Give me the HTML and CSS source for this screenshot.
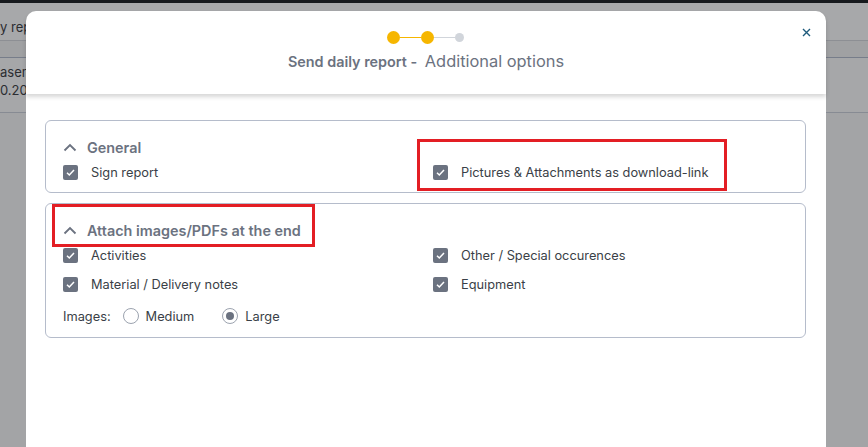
FILE: index.html
```html
<!doctype html>
<html lang="en">
  <head>
    <meta charset="utf-8">
    <title>Send daily report</title>
    <link rel="stylesheet" href="styles.css">
  </head>
  <body>
    <div class="page">
      <div class="topbar"></div>
      <div class="page-row tab">y repo</div>
      <div class="page-row gap"></div>
      <div class="page-row item">
        <div>asem</div>
        <div>0.202</div>
      </div>
    </div>

    <div class="modal">
      <div class="modal-head">
        <div class="stepper">
          <span class="dot done"></span>
          <span class="bar done"></span>
          <span class="dot done"></span>
          <span class="bar"></span>
          <span class="dot small"></span>
        </div>
        <div class="title"><b>Send daily report -</b> Additional options</div>
        <button class="close" type="button">
          <svg width="9" height="9" viewBox="0 0 9 9"><path d="M1 1L8 8M8 1L1 8" stroke="#1f5b7c" stroke-width="1.4" fill="none"/></svg>
        </button>
      </div>

      <div class="modal-body">
        <div class="group">
          <div class="group-title">
            <svg class="chev" width="14" height="9" viewBox="0 0 14 9"><path d="M1.5 7.5L7 2L12.5 7.5" stroke="#6b7280" stroke-width="1.8" fill="none"/></svg>
            General
          </div>
          <div class="grid">
            <label class="check"><span class="box"></span>Sign report</label>
            <label class="check"><span class="box"></span>Pictures &amp; Attachments as download-link</label>
          </div>
        </div>

        <div class="group">
          <div class="group-title">
            <svg class="chev" width="14" height="9" viewBox="0 0 14 9"><path d="M1.5 7.5L7 2L12.5 7.5" stroke="#6b7280" stroke-width="1.8" fill="none"/></svg>
            Attach images/PDFs at the end
          </div>
          <div class="grid tight">
            <label class="check"><span class="box"></span>Activities</label>
            <label class="check"><span class="box"></span>Other / Special occurences</label>
            <label class="check"><span class="box"></span>Material / Delivery notes</label>
            <label class="check"><span class="box"></span>Equipment</label>
          </div>
          <div class="sizes">
            <span>Images:</span>
            <label class="radio"><span class="ring"></span>Medium</label>
            <label class="radio"><span class="ring on"></span>Large</label>
          </div>
        </div>
      </div>
    </div>

    <div class="mark mark-a"></div>
    <div class="mark mark-b"></div>
  </body>
</html>
```

FILE: styles.css
```css
html, body {
  height: 100%;
}

body {
  margin: 0;
  font-family: Inter, "Noto Sans", sans-serif;
  background: #a3a4a6;
  overflow: hidden;
}

.page {
  display: flex;
  flex-direction: column;
}

.topbar {
  height: 3px;
  background: #16191d;
}

.page-row {
  color: #2b2d31;
  font-size: 13px;
}

.tab {
  height: 37px;
  line-height: 48px;
  border-bottom: 1px solid #8d8f94;
  background: #a7a8aa;
}

.gap {
  height: 16px;
  background: #a0a1a3;
  border-bottom: 1px solid #777d8a;
}

.item {
  height: 49px;
  padding-top: 5px;
  line-height: 18px;
  background: #a6a7a9;
  border-bottom: 1px solid #878b93;
}

.modal {
  position: absolute;
  left: 26px;
  top: 11px;
  width: 800px;
  height: 436px;
  background: #fff;
  border-radius: 10px 10px 0 0;
}

.modal-head {
  position: relative;
  height: 83px;
  box-sizing: border-box;
  padding-top: 20px;
  border-radius: 10px 10px 0 0;
  box-shadow: 0 3px 4px rgba(0, 0, 0, 0.16);
  text-align: center;
}

.stepper {
  display: flex;
  align-items: center;
  justify-content: center;
  height: 13px;
  margin-left: -1px;
}

.dot {
  width: 13px;
  height: 13px;
  border-radius: 50%;
  background: #d1d5db;
}

.dot.small {
  width: 9px;
  height: 9px;
}

.bar {
  width: 21px;
  height: 1px;
  background: #d1d5db;
}

.done {
  background: #f6b600;
}

.title {
  margin-top: 8px;
  font-size: 16.4px;
  color: #6b7280;
  line-height: 19px;
}

.title b {
  font-size: 14.4px;
  font-weight: 600;
  margin-right: 3px;
}

.close {
  position: absolute;
  right: 15px;
  top: 14px;
  border: 0;
  background: none;
  padding: 0;
  cursor: pointer;
}

.modal-body {
  padding: 26px 20px 0 19px;
  display: flex;
  flex-direction: column;
  gap: 10px;
}

.group {
  border: 1px solid #b5bccb;
  border-radius: 6px;
  padding: 16px 18px 10px 17px;
}

.group-title {
  display: flex;
  align-items: center;
  gap: 10px;
  font-size: 14.4px;
  font-weight: 600;
  color: #6b7280;
  height: 20px;
  margin-bottom: 5px;
}

.grid {
  display: grid;
  grid-template-columns: 370px 1fr;
  row-gap: 9px;
}

.check {
  display: flex;
  align-items: center;
  gap: 13px;
  font-size: 12.8px;
  color: #3a3f47;
  height: 20px;
}

.box {
  width: 15px;
  height: 15px;
  border-radius: 2px;
  background: #6b7280 url("data:image/svg+xml,%3Csvg xmlns='http://www.w3.org/2000/svg' viewBox='0 0 15 15'%3E%3Cpath d='M4 7.8L6.3 10L11 5' stroke='white' stroke-width='1.5' fill='none'/%3E%3C/svg%3E") center / 15px 15px no-repeat;
}

.sizes {
  display: flex;
  align-items: center;
  gap: 12px;
  margin-top: 11px;
  font-size: 12.8px;
  color: #3a3f47;
  height: 22px;
}

.radio {
  display: flex;
  align-items: center;
  gap: 7px;
  margin-right: 16px;
}

.ring {
  width: 14px;
  height: 14px;
  border: 1px solid #9ca3af;
  border-radius: 50%;
  display: flex;
  align-items: center;
  justify-content: center;
}

.ring.on::after {
  content: "";
  width: 8px;
  height: 8px;
  border-radius: 50%;
  background: #6b7280;
}

.mark {
  position: absolute;
  border: 3px solid #e31e24;
  box-sizing: border-box;
}

.mark-a {
  left: 417px;
  top: 139px;
  width: 310px;
  height: 52px;
}

.mark-b {
  left: 52px;
  top: 204px;
  width: 263px;
  height: 43px;
}
```
